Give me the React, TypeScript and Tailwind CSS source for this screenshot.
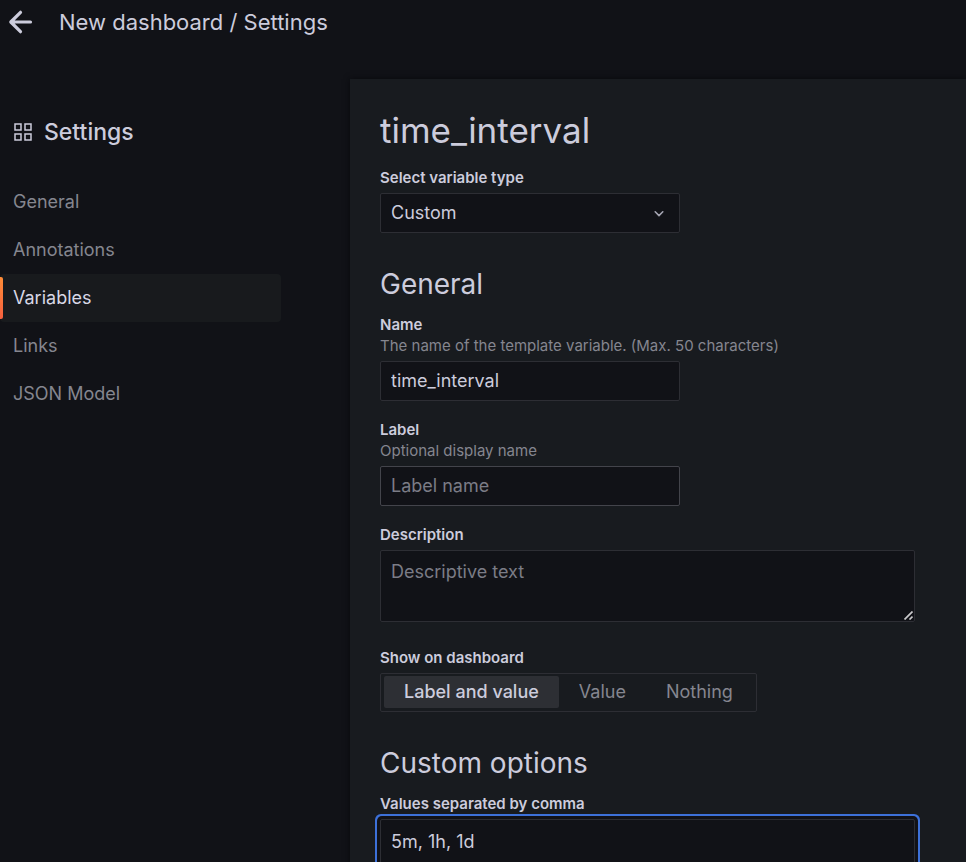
import { useState } from "react";
import type { ReactNode } from "react";

const navItems = ["General", "Annotations", "Variables", "Links", "JSON Model"];
const displayOptions = ["Label and value", "Value", "Nothing"];

const control =
  "block rounded-xs border border-[#2d2e34] bg-[#111217] px-2.5 text-lg leading-7 text-[#ccccdc] outline-none placeholder:text-[#7b7c86]";

function Field({ id, label, description, children }: { id: string; label: string; description?: string; children: ReactNode }) {
  return (
    <div className="flex flex-col">
      <label htmlFor={id} className="mb-[5px] text-[15px] leading-[21px] text-[#ccccdc]">
        <span className="block font-semibold">{label}</span>
        {description && <span className="block text-[#85868f]">{description}</span>}
      </label>
      {children}
    </div>
  );
}

function Sidebar() {
  return (
    <nav aria-label="Settings" className="w-[350px] shrink-0 pt-[72px]">
      <h2 className="flex h-8 items-center gap-3 pl-3.5 text-[23px] font-medium text-[#ccccdc]">
        <svg width="18" height="18" viewBox="0 0 18 18" fill="none" stroke="currentColor" strokeWidth="1.5" aria-hidden="true">
          <rect x="1" y="1" width="6" height="6" />
          <rect x="11" y="1" width="6" height="6" />
          <rect x="1" y="11" width="6" height="6" />
          <rect x="11" y="11" width="6" height="6" />
        </svg>
        Settings
      </h2>
      <ul className="mt-[30px] w-[281px]">
        {navItems.map((item) => {
          const active = item === "Variables";
          return (
            <li key={item}>
              <a
                href="#"
                aria-current={active ? "page" : undefined}
                className={
                  active
                    ? "relative flex h-12 items-center rounded-sm bg-[#181a1d] pl-[13px] text-lg text-[#d8d8e6]"
                    : "flex h-12 items-center pl-[13px] text-lg text-[#85868f]"
                }
              >
                {active && (
                  <span className="absolute inset-y-[3px] left-0 w-[3px] rounded-r-xs bg-linear-to-b from-[#ff8c37] to-[#f55f3e]" />
                )}
                {item}
              </a>
            </li>
          );
        })}
      </ul>
    </nav>
  );
}

export default function App() {
  const [display, setDisplay] = useState("Label and value");

  return (
    <div className="flex h-screen flex-col bg-[#111217] font-['Inter',sans-serif] text-[#ccccdc]">
      <header className="flex h-11 shrink-0 items-center gap-[26px] pl-2">
        <button type="button" aria-label="Back" className="flex">
          <svg width="25" height="24" viewBox="0 0 25 24" fill="none" stroke="currentColor" strokeWidth="3.2" strokeLinecap="round" strokeLinejoin="round" aria-hidden="true">
            <path d="M22.5 12H3M12.5 2.3L2.8 12l9.7 9.7" />
          </svg>
        </button>
        <h1 className="text-[22px] leading-8">New dashboard / Settings</h1>
      </header>

      <div className="flex min-h-0 flex-1 overflow-y-auto [scrollbar-width:none]">
        <Sidebar />
        <main className="mt-[35px] h-fit min-w-0 flex-1 bg-[#181b1f] pt-[30px] pr-[51px] pb-8 pl-[30px] shadow-[0_0_6px_#08090c]">
          <h2 className="mb-4 text-[35px] leading-[42px]">time_interval</h2>

          <Field id="type" label="Select variable type">
            <div className="relative w-[300px] max-w-full">
              <select id="type" className={`${control} h-10 w-full appearance-none`}>
                <option>Custom</option>
              </select>
              <svg className="pointer-events-none absolute top-[17px] right-4 text-[#a5a5b2]" width="10" height="8" viewBox="0 0 10 8" fill="none" stroke="currentColor" strokeWidth="1.6" strokeLinecap="round" strokeLinejoin="round" aria-hidden="true">
                <path d="M1.2 1.8L5 5.6l3.8-3.8" />
              </svg>
            </div>
          </Field>

          <h3 className="mt-[33px] mb-3 text-[28px] leading-9">General</h3>
          <div className="flex flex-col gap-[18px]">
            <Field id="name" label="Name" description="The name of the template variable. (Max. 50 characters)">
              <input id="name" type="text" defaultValue="time_interval" className={`${control} h-10 w-[300px] max-w-full pb-0.5`} />
            </Field>
            <Field id="label" label="Label" description="Optional display name">
              <input id="label" type="text" placeholder="Label name" className={`${control} h-10 w-[300px] max-w-full border-[#43444b] pb-0.5`} />
            </Field>
            <Field id="description" label="Description">
              <div className="relative">
                <textarea id="description" placeholder="Descriptive text" className={`${control} h-[72px] w-full resize-none py-[7px]`} />
                <svg className="pointer-events-none absolute right-0.5 bottom-0.5 text-[#c9c9cb]" width="9" height="9" viewBox="0 0 9 9" fill="none" stroke="currentColor" strokeWidth="1.7" aria-hidden="true">
                  <path d="M0.5 8.5l8-8M5.5 8.5l3-3" />
                </svg>
              </div>
            </Field>
          </div>

          <fieldset className="mt-[25px]">
            <legend className="mb-[5px] text-[15px] leading-[21px] font-semibold">Show on dashboard</legend>
            <div className="flex h-[39px] w-fit rounded-xs border border-[#2d2e34] p-[3px] pt-0.5">
              {displayOptions.map((option) => (
                <label
                  key={option}
                  className="flex cursor-pointer items-center rounded-xs px-5 text-lg text-[#85868f] has-checked:bg-[#2d2f34] has-checked:font-medium has-checked:text-[#ccccdc]"
                >
                  <input
                    type="radio"
                    name="display"
                    checked={display === option}
                    onChange={() => setDisplay(option)}
                    className="sr-only"
                  />
                  {option}
                </label>
              ))}
            </div>
          </fieldset>

          <h3 className="mt-[33px] mb-3 text-[28px] leading-9">Custom options</h3>
          <Field id="values" label="Values separated by comma">
            <textarea
              id="values"
              defaultValue="5m, 1h, 1d"
              className={`${control} h-[72px] w-full resize py-2 shadow-[0_0_0_3px_#111217,0_0_0_5px_#3d71d9]`}
            />
          </Field>
        </main>
      </div>
    </div>
  );
}
